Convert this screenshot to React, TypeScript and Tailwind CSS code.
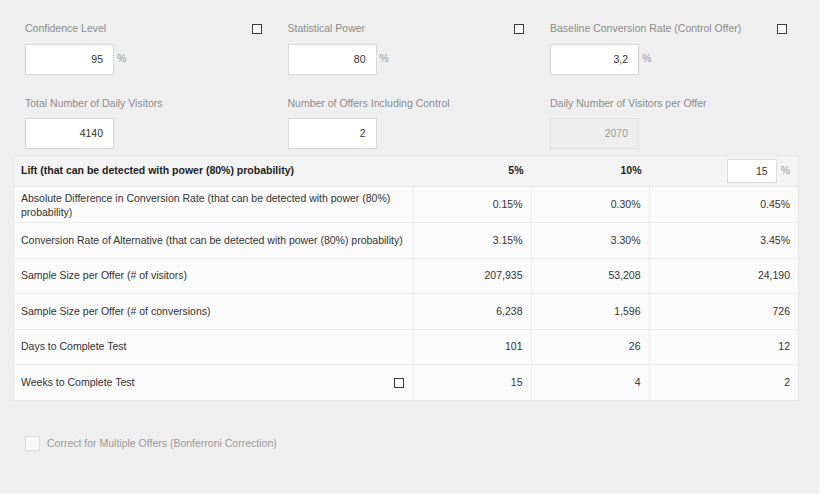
import React from "react";

function SmallBox() {
  return <span className="inline-block w-[10px] h-[10px] border-[1.5px] border-[#3a3a3a] bg-white shrink-0" />;
}

function Field({
  label,
  value,
  pct,
  box,
  disabled,
}: {
  label: string;
  value: string;
  pct?: boolean;
  box?: boolean;
  disabled?: boolean;
}) {
  return (
    <div>
      <div className="flex items-center justify-between h-[13px] leading-[13px] text-[#8c8c8c]">
        <span>{label}</span>
        {box ? <SmallBox /> : null}
      </div>
      <div className="mt-[8.5px] flex items-center">
        <div
          className={
            disabled
              ? "w-[89px] h-[31px] border border-[#e2e2e2] bg-[#eeeeee] text-right pr-[10px] leading-[29px] text-[#9a9a9a]"
              : "w-[89px] h-[31px] border border-[#d8d8d8] bg-white text-right pr-[10px] leading-[29px] text-[#333]"
          }
        >
          {value}
        </div>
        {pct ? <span className="ml-[3px] text-[#9a9a9a]">%</span> : null}
      </div>
    </div>
  );
}

const rows: { label: React.ReactNode; v: string[]; h: string; box?: boolean }[] = [
  {
    label: (
      <span className="leading-[14px] block">
        Absolute Difference in Conversion Rate (that can be detected with power (80%)
        <br />
        probability)
      </span>
    ),
    v: ["0.15%", "0.30%", "0.45%"],
    h: "h-[36px]",
  },
  {
    label: "Conversion Rate of Alternative (that can be detected with power (80%) probability)",
    v: ["3.15%", "3.30%", "3.45%"],
    h: "h-[36px]",
  },
  { label: "Sample Size per Offer (# of visitors)", v: ["207,935", "53,208", "24,190"], h: "h-[35px]" },
  { label: "Sample Size per Offer (# of conversions)", v: ["6,238", "1,596", "726"], h: "h-[36px]" },
  { label: "Days to Complete Test", v: ["101", "26", "12"], h: "h-[35px]" },
  { label: "Weeks to Complete Test", v: ["15", "4", "2"], h: "h-[35px]", box: true },
];

export default function App() {
  return (
    <div className="w-[820px] h-[494px] bg-[#efefef] border-r border-b border-[#f7f7f7] font-['Liberation_Sans',Arial,sans-serif] text-[10.5px] overflow-hidden">
      <div className="grid grid-cols-[236.5px_236.5px_236.5px] gap-x-[26px] gap-y-[22px] pl-[25px] pt-[22px]">
        <Field label="Confidence Level" value="95" pct box />
        <Field label="Statistical Power" value="80" pct box />
        <Field label="Baseline Conversion Rate (Control Offer)" value="3,2" pct box />
        <Field label="Total Number of Daily Visitors" value="4140" />
        <Field label="Number of Offers Including Control" value="2" />
        <Field label="Daily Number of Visitors per Offer" value="2070" disabled />
      </div>

      <div className="ml-[13px] mt-[6px] w-[786px] border border-[#e7e7e7] text-[#333]">
        <div className="flex h-[31px] bg-[#f3f3f3] border-b border-[#e9e9e9] font-bold text-[#222]">
          <div className="w-[400px] flex items-center pl-[7px]">Lift (that can be detected with power (80%) probability)</div>
          <div className="w-[118px] flex items-center justify-end pr-[8.5px]">5%</div>
          <div className="w-[118px] flex items-center justify-end pr-[8.5px]">10%</div>
          <div className="flex-1 flex items-center justify-end pr-[8px] font-normal">
            <div className="w-[50px] h-[24px] bg-white border border-[#dcdcdc] text-right pr-[8px] leading-[22px] text-[#333]">15</div>
            <span className="ml-[4px] text-[#9a9a9a]">%</span>
          </div>
        </div>
        {rows.map((r, i) => (
          <div
            key={i}
            className={
              "flex bg-[#fafafa] " + r.h + (i < rows.length - 1 ? " border-b border-[#ececec]" : "")
            }
          >
            <div className="w-[400px] flex items-center justify-between pl-[7px] pr-[9px] border-r border-[#ececec]">
              <span>{r.label}</span>
              {r.box ? <SmallBox /> : null}
            </div>
            <div className="w-[118px] flex items-center justify-end pr-[8.5px] border-r border-[#ececec]">{r.v[0]}</div>
            <div className="w-[118px] flex items-center justify-end pr-[8.5px] border-r border-[#ececec]">{r.v[1]}</div>
            <div className="flex-1 flex items-center justify-end pr-[8px]">{r.v[2]}</div>
          </div>
        ))}
      </div>

      <div className="mt-[35px] ml-[25px] flex items-center">
        <span className="w-[15px] h-[15px] border border-[#dcdcdc] bg-[#f8f8f8] rounded-[1px]" />
        <span className="ml-[7px] text-[#9a9a9a]">Correct for Multiple Offers (Bonferroni Correction)</span>
      </div>
    </div>
  );
}
